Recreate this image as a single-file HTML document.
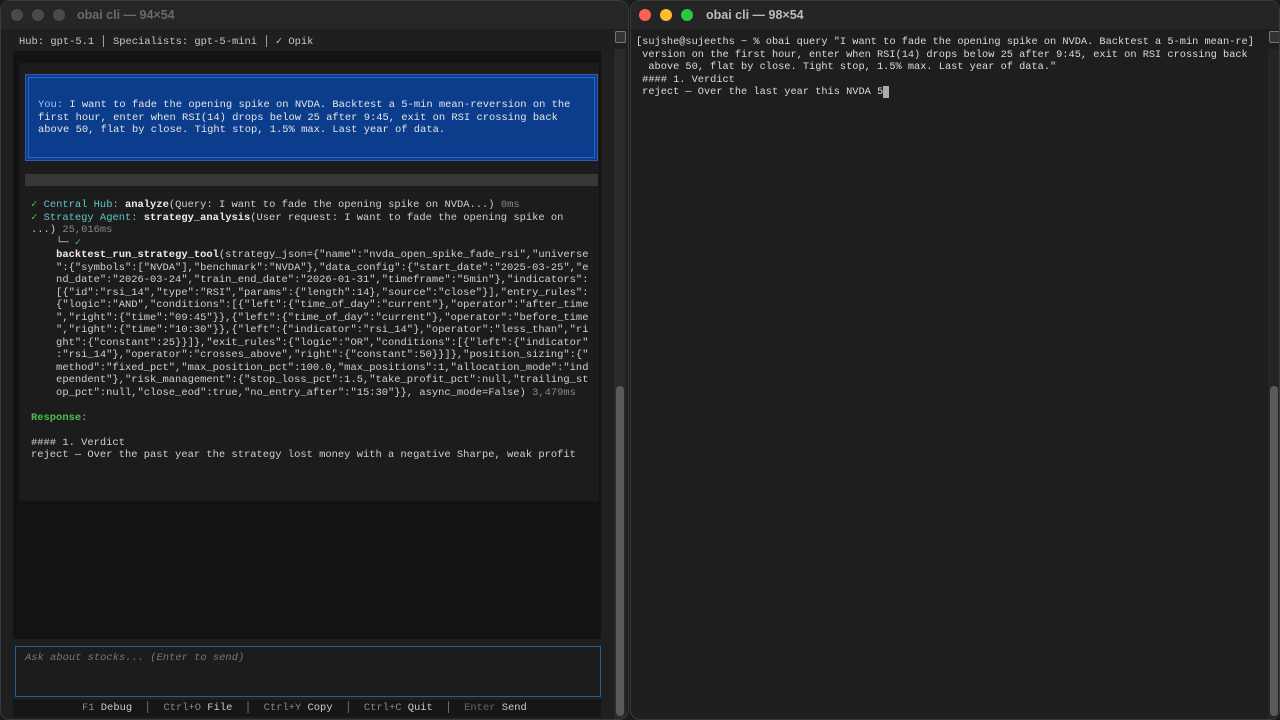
<!DOCTYPE html>
<html><head><meta charset="utf-8"><style>
*{margin:0;padding:0;box-sizing:border-box}
body{width:1280px;height:720px;background:#1a1a1a;position:relative;overflow:hidden;font-family:"Liberation Mono",monospace;font-size:10.3px;color:#d0d0d0}
.abs{position:absolute}
.win{position:absolute;top:0;height:720px;background:#1e1e1e;border:1px solid #3a3a3a;border-radius:10px;overflow:hidden}
.tb{position:absolute;top:0;left:0;right:0;height:28px;background:#2a2a2a}
.dot{position:absolute;top:8px;width:12px;height:12px;border-radius:50%}
.title{position:absolute;top:7px;font-family:"Liberation Sans",sans-serif;font-size:12.5px;font-weight:bold}
pre{font-family:"Liberation Mono",monospace;font-size:10.3px;line-height:12.5px;white-space:pre}
.L pre{font-size:10.45px}
.c{color:#5fc9c0}.b{font-weight:bold;color:#eee}.g{color:#888}.gr{color:#4cc04c}
</style></head><body>
<div class="win L" style="left:0;width:629px;background:#1f1f1f">
  <div class="tb" style="background:#262626"></div>
  <div class="dot" style="left:10px;background:#4a4a4a"></div>
  <div class="dot" style="left:31px;background:#4a4a4a"></div>
  <div class="dot" style="left:52px;background:#4a4a4a"></div>
  <div class="title" style="left:76px;color:#6a6a6a">obai cli — 94×54</div>
  <pre class="abs" style="left:18px;top:35px;color:#c8c8c8">Hub: gpt-5.1 │ Specialists: gpt-5-mini │ ✓ Opik</pre>
  <div class="abs" style="left:614px;top:30px;width:11px;height:12px;border:1px solid #777;border-radius:2px;background:#333"></div>
  <div class="abs" style="left:613px;top:48px;width:12px;height:672px;background:#2a2a2a"></div>
  <div class="abs" style="left:615px;top:385px;width:8px;height:330px;background:#5a5a5a;border-radius:4px"></div>
  <div class="abs" style="left:12px;top:50px;width:588px;height:588px;background:#131313"></div>
  <div class="abs" style="left:18px;top:62px;width:580px;height:438px;background:#1c1c1c"></div>
  <div class="abs" style="left:24px;top:73px;width:573px;height:87px;background:#0b3d8c;border:1px solid #2a5fb0"></div>
  <div class="abs" style="left:27px;top:76px;width:567px;height:81px;border:1px solid #2f65c0"></div>
  <pre class="abs" style="left:37px;top:98px;color:#e6e6e6"><span style="color:#7fd0ff">You:</span> I want to fade the opening spike on NVDA. Backtest a 5-min mean-reversion on the
first hour, enter when RSI(14) drops below 25 after 9:45, exit on RSI crossing back
above 50, flat by close. Tight stop, 1.5% max. Last year of data.</pre>
  <div class="abs" style="left:24px;top:173px;width:573px;height:12px;background:#383838"></div>
  <pre class="abs" style="left:30px;top:198px;color:#d0d0d0"><span class="gr">✓</span> <span class="c">Central Hub:</span> <span class="b">analyze</span>(Query: I want to fade the opening spike on NVDA...) <span class="g">0ms</span>
<span class="gr">✓</span> <span class="c">Strategy Agent:</span> <span class="b">strategy_analysis</span>(User request: I want to fade the opening spike on
...) <span class="g">25,016ms</span>
    └─ <span class="gr">✓</span>
    <span class="b">backtest_run_strategy_tool</span>(strategy_json={"name":"nvda_open_spike_fade_rsi","universe
    ":{"symbols":["NVDA"],"benchmark":"NVDA"},"data_config":{"start_date":"2025-03-25","e
    nd_date":"2026-03-24","train_end_date":"2026-01-31","timeframe":"5min"},"indicators":
    [{"id":"rsi_14","type":"RSI","params":{"length":14},"source":"close"}],"entry_rules":
    {"logic":"AND","conditions":[{"left":{"time_of_day":"current"},"operator":"after_time
    ","right":{"time":"09:45"}},{"left":{"time_of_day":"current"},"operator":"before_time
    ","right":{"time":"10:30"}},{"left":{"indicator":"rsi_14"},"operator":"less_than","ri
    ght":{"constant":25}}]},"exit_rules":{"logic":"OR","conditions":[{"left":{"indicator"
    :"rsi_14"},"operator":"crosses_above","right":{"constant":50}}]},"position_sizing":{"
    method":"fixed_pct","max_position_pct":100.0,"max_positions":1,"allocation_mode":"ind
    ependent"},"risk_management":{"stop_loss_pct":1.5,"take_profit_pct":null,"trailing_st
    op_pct":null,"close_eod":true,"no_entry_after":"15:30"}}, async_mode=False) <span class="g">3,479ms</span>

<span class="gr" style="font-weight:bold">Response:</span>

#### 1. Verdict
reject — Over the past year the strategy lost money with a negative Sharpe, weak profit</pre>
  <div class="abs" style="left:14px;top:645px;width:586px;height:51px;background:#1c1c1c;border:1px solid #1f5f9a"></div>
  <pre class="abs" style="left:24px;top:651px;color:#777;font-style:italic">Ask about stocks... (Enter to send)</pre>
  <div class="abs" style="left:12px;top:699px;width:588px;height:17px;background:#161616"></div>
  <pre class="abs" style="left:81px;top:701px;color:#888">F1 <span style="color:#ccc">Debug</span>  │  Ctrl+O <span style="color:#ccc">File</span>  │  Ctrl+Y <span style="color:#ccc">Copy</span>  │  Ctrl+C <span style="color:#ccc">Quit</span>  │  <span style="color:#666">Enter</span> <span style="color:#ccc">Send</span></pre>
</div>
<div class="win" style="left:630px;width:650px;background:#1e1e1e">
  <div class="tb" style="background:#252525"></div>
  <div class="dot" style="left:8px;background:#fe5f57"></div>
  <div class="dot" style="left:29px;background:#febc2e"></div>
  <div class="dot" style="left:50px;background:#28c840"></div>
  <div class="title" style="left:75px;color:#bdbdbd">obai cli — 98×54</div>
  <div class="abs" style="left:638px;top:30px;width:11px;height:12px;border:1px solid #777;border-radius:2px;background:#333"></div>
  <div class="abs" style="left:637px;top:48px;width:12px;height:672px;background:#252525"></div>
  <div class="abs" style="left:639px;top:385px;width:8px;height:330px;background:#5a5a5a;border-radius:4px"></div>
  <pre class="abs" style="left:5px;top:35px;color:#dcdcdc">[sujshe@sujeeths ~ % obai query "I want to fade the opening spike on NVDA. Backtest a 5-min mean-re]
 version on the first hour, enter when RSI(14) drops below 25 after 9:45, exit on RSI crossing back
  above 50, flat by close. Tight stop, 1.5% max. Last year of data."
 #### 1. Verdict
 reject — Over the last year this NVDA 5<span style="background:#aaa">&nbsp;</span></pre>
</div>
</body></html>
